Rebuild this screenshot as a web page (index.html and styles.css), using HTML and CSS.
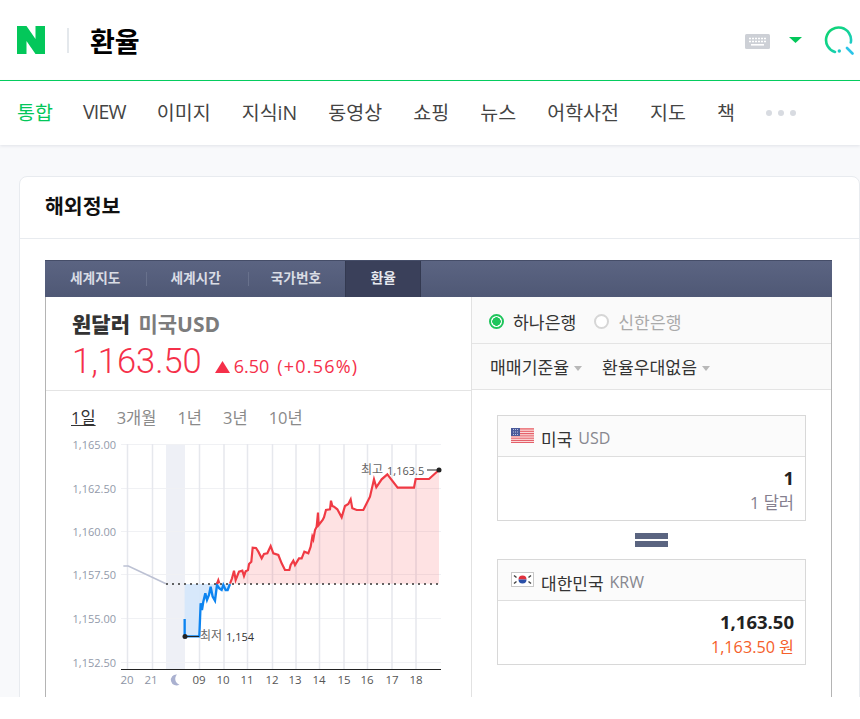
FILE: index.html
```html
<!DOCTYPE html>
<html lang="ko">
<head>
    <meta charset="UTF-8">
    <title>환율 : 네이버 검색</title>
    <link rel="stylesheet" href="styles.css">
</head>
<body>
    <header class="top">
        <svg class="logo" width="28" height="28" viewBox="0 0 28 28"><path d="M0 0h9.5l9 13V0H28v28h-9.5l-9-13v13H0z" fill="#03c75a"/></svg>
        <span class="top-sep"></span>
        <h1 class="query">환율</h1>
        <svg class="kbd" width="25" height="15" viewBox="0 0 25 15">
            <rect width="25" height="15" rx="1.5" fill="#cdd0d6"/>
            <path d="M4 4.500h17M4 7.500h17" stroke="#fff" stroke-width="1.6" stroke-dasharray="2 1"/>
            <rect x="6" y="10" width="13" height="1.6" fill="#fff"/>
        </svg>
        <svg class="drop" width="13" height="6" viewBox="0 0 13 6"><path d="M0 0h13L6.500 6z" fill="#03c75a"/></svg>
        <svg class="search" width="30" height="30" viewBox="0 0 30 30">
            <defs><linearGradient id="sg" x1="0" y1="0" x2="1" y2="1"><stop offset="0" stop-color="#0fd46c"/><stop offset=".6" stop-color="#14d2a0"/><stop offset="1" stop-color="#2bc4e8"/></linearGradient></defs>
            <path d="M11 27A12.500 12.500 0 1 1 26.800 17.500" fill="none" stroke="url(#sg)" stroke-width="2.600" stroke-linecap="round"/>
            <circle cx="15.300" cy="26" r="1.700" fill="#1cc8c8"/>
            <path d="M23 23L28.500 28.500" stroke="#2bc4e8" stroke-width="2.600" stroke-linecap="round"/>
        </svg>
    </header>

    <nav class="gnb">
        <a class="on">통합</a>
        <a class="latin">VIEW</a>
        <a>이미지</a>
        <a>지식iN</a>
        <a>동영상</a>
        <a>쇼핑</a>
        <a>뉴스</a>
        <a>어학사전</a>
        <a>지도</a>
        <a>책</a>
        <span class="more"><i></i><i></i><i></i></span>
    </nav>

    <main class="page">
        <section class="card">
            <h2 class="card-title">해외정보</h2>
            <div class="card-body">
                <div class="tabs">
                    <a class="tab tab-first">세계지도</a>
                    <span class="tab-sep"></span>
                    <a class="tab tab-second">세계시간</a>
                    <span class="tab-sep"></span>
                    <a class="tab tab-third">국가번호</a>
                    <a class="tab active">환율</a>
                </div>
                <div class="panel">
                    <div class="left">
                        <div class="summary">
                            <div class="pair"><b>원달러</b> <em>미국USD</em></div>
                            <div class="rate">
                                <span class="price">1,163.50</span>
                                <svg class="up" width="15" height="12" viewBox="0 0 15 12"><path d="M7.500 0L15 12H0z" fill="#f5304a"/></svg>
                                <span class="diff">6.50</span>
                                <span class="pct">(+0.56%)</span>
                            </div>
                        </div>
                        <div class="periods">
                            <a class="on">1일</a>
                            <a>3개월</a>
                            <a>1년</a>
                            <a>3년</a>
                            <a>10년</a>
                        </div>
                        <svg class="chart" width="425" height="267" viewBox="46 430 425 267">
                            <rect x="166" y="444" width="19" height="225" fill="#eef0f6"/>
                            <g class="grid-h">
                                <path d="M121 444.500H441M121 488.500H441M121 531.500H441M121 574.500H441M121 618.500H441M121 662.500H441"/>
                            </g>
                            <g class="grid-v">
                                <path d="M127.500 444V669M152.500 444V669M199.500 444V669M224 444V669M247.500 444V669M272.500 444V669M296 444V669M319.500 444V669M344 444V669M367.500 444V669M392 444V669M416 444V669"/>
                            </g>
                            <path class="axis" d="M121 669.500H441"/>

                            <g transform="translate(60 430) scale(.3333)">
                                <path class="gray-line" d="M190 408L205 408L318 461"/>
                                <path class="blue-fill" d="M374 462V619H418L422 520L426 540L430 515L436 490L441 510L452 470L458 500L465 512L471 465L478 475L485 480L490 465L497 480L503 480L510 462z"/>
                                <path class="blue-line" d="M374 567V619H418L422 520L426 540L430 515L436 490L441 510L447 495L452 470L458 500L465 512L471 465L478 475L485 480L490 465L497 480L503 480L510 462"/>
                                <path class="red-line" d="M471 462L475 451L478 460"/>
                            </g>
                            <g transform="translate(250 430) scale(.3333)">
                                <path class="red-fill" d="M-60 461L-54 445L-48 422L-43 450L-33 425L-23 422L-18 438L-13 424L-6 420L-3 402L4 395L8 353L18 354L25 365L35 385L42 372L52 370L62 348L70 370L85 375L95 400L105 420L118 420L122 405L130 392L135 405L147 385L155 385L163 365L175 370L182 350L187 320L195 300L204 248L206 285L218 270L228 240L240 238L243 212L252 230L262 238L275 262L285 228L295 222L302 208L307 235L320 240L340 240L360 200L372 148L379 172L395 148L412 133L443 173L492 173L497 147L537 147L567 120V461z"/>
                                <path class="red-line" d="M-60 461L-54 445L-48 422L-43 450L-33 425L-23 422L-18 438L-13 424L-6 420L-3 402L4 395L8 353L18 354L25 365L35 385L42 372L52 370L62 348L70 370L85 375L95 400L105 420L118 420L122 405L130 392L135 405L147 385L155 385L163 365L175 370L182 350L187 320L190 328L195 300L200 290L204 248L206 285L218 270L222 262L228 240L240 238L243 212L247 228L252 230L262 238L275 262L285 228L295 222L302 208L307 235L320 240L340 240L360 200L372 148L379 172L395 148L412 133L443 173L492 173L497 147L537 147L567 120"/>
                            </g>
                            <path class="base" d="M166 584H441"/>

                            <g class="y-labels">
                                <text x="116" y="449">1,165.00</text>
                                <text x="116" y="493">1,162.50</text>
                                <text x="116" y="536">1,160.00</text>
                                <text x="116" y="579">1,157.50</text>
                                <text x="116" y="623">1,155.00</text>
                                <text x="116" y="667">1,152.50</text>
                            </g>
                            <g class="x-labels">
                                <text x="127" y="684">20</text>
                                <text x="151" y="684">21</text>
                            </g>
                            <path class="moon" d="M177 674.500A5.500 5.500 0 1 0 179.500 684.500A6 6 0 0 1 177 674.500z"/>
                            <g class="x-labels dark">
                                <text x="199" y="684">09</text>
                                <text x="223" y="684">10</text>
                                <text x="247" y="684">11</text>
                                <text x="272" y="684">12</text>
                                <text x="295" y="684">13</text>
                                <text x="319" y="684">14</text>
                                <text x="344" y="684">15</text>
                                <text x="367" y="684">16</text>
                                <text x="392" y="684">17</text>
                                <text x="416" y="684">18</text>
                            </g>

                            <path class="marker" d="M185 636.500H199M427 470H438"/>
                            <circle cx="185" cy="636.500" r="2.500" fill="#222"/>
                            <circle cx="439" cy="470" r="2.500" fill="#222"/>
                            <text class="mark-ko" x="200" y="640">최저</text>
                            <text class="mark-num" x="226" y="641">1,154</text>
                            <text class="mark-ko" x="361" y="474">최고</text>
                            <text class="mark-num top-num" x="387" y="475">1,163.5</text>
                        </svg>
                    </div>
                    <div class="right">
                        <div class="banks">
                            <label class="bank"><span class="radio checked"></span>하나은행</label>
                            <label class="bank off"><span class="radio"></span>신한은행</label>
                        </div>
                        <div class="options">
                            <span class="opt">매매기준율</span>
                            <span class="opt">환율우대없음</span>
                        </div>
                        <div class="calc">
                            <div class="box">
                                <div class="box-head">
                                    <svg class="flag" width="23" height="15" viewBox="0 0 23 15">
                                        <rect width="23" height="15" fill="#f6a5a5"/>
                                        <path d="M0 1h23M0 3.300h23M0 5.600h23M0 7.900h23M0 10.200h23M0 12.500h23M0 14.500h23" stroke="#e4606a" stroke-width="1.100"/>
                                        <path d="M0 2.200h23M0 4.500h23M0 6.800h23M0 9h23M0 11.300h23M0 13.500h23" stroke="#fbe6e6" stroke-width=".8"/>
                                        <rect width="9" height="8" fill="#4a5a9a"/>
                                        <path d="M2 1.500h5M2 4h5M2 6.500h5" stroke="#b9c2e2" stroke-width="1" stroke-dasharray="1 1"/>
                                    </svg>
                                    <span class="country">미국</span> <span class="code">USD</span>
                                </div>
                                <div class="box-body">
                                    <strong>1</strong>
                                    <span class="sub">1 달러</span>
                                </div>
                            </div>
                            <div class="equals"><i></i><i></i></div>
                            <div class="box">
                                <div class="box-head">
                                    <svg class="flag" width="23" height="15" viewBox="0 0 23 15">
                                        <rect x=".5" y=".5" width="22" height="14" fill="#fff" stroke="#c8c8c8"/>
                                        <path d="M7.500 7.500a4 4 0 0 1 8 0z" fill="#e0303c"/>
                                        <path d="M7.500 7.500a4 4 0 0 0 8 0z" fill="#2a4fa8"/>
                                        <path d="M3 3.500l2.500 2M3 11.500l2.500-2M20 3.500l-2.500 2M20 11.500l-2.500-2" stroke="#444" stroke-width="1.500"/>
                                    </svg>
                                    <span class="country">대한민국</span> <span class="code">KRW</span>
                                </div>
                                <div class="box-body">
                                    <strong>1,163.50</strong>
                                    <span class="sub won">1,163.50 원</span>
                                </div>
                            </div>
                        </div>
                    </div>
                </div>
            </div>
        </section>
    </main>
</body>
</html>
```

FILE: styles.css
```css
* {
    box-sizing: border-box;
}
body {
    margin: 0;
    background: #fff;
    font-family: "Open Sans", "Noto Sans CJK KR", sans-serif;
    color: #333;
}
a {
    color: inherit;
    text-decoration: none;
}
em, i {
    font-style: normal;
}

/* top search bar */
.top {
    height: 81px;
    display: flex;
    align-items: center;
    padding: 0 6px 0 17px;
    border-bottom: 1px solid #03cf5d;
}
.top-sep {
    width: 2px;
    height: 25px;
    margin: 1px 21px 0 22px;
    background: #e4e8ec;
}
.query {
    margin: 0;
    font-size: 27px;
    font-weight: 700;
    color: #000;
    flex: 1;
}
.kbd {
    margin: 2px 19px 0 0;
}
.drop {
    margin: 0 22px 0 0;
}

/* menu */
.gnb {
    height: 64px;
    display: flex;
    align-items: center;
    gap: 31.100px;
    padding: 0 0 4px 17px;
    font-size: 19.500px;
    color: #444;
    background: #fff;
    box-shadow: 0 1px 3px rgba(120, 130, 150, .18);
    position: relative;
}
.gnb .on {
    color: #03c75a;
    margin-right: -1px;
}
.gnb .latin {
    letter-spacing: -.8px;
    margin-top: 1px;
}
.more {
    display: flex;
    gap: 6px;
    margin-top: 4px;
}
.more i {
    width: 6px;
    height: 6px;
    border-radius: 50%;
    background: #d8dbe1;
}

/* card */
.page {
    height: 552px;
    overflow: hidden;
    padding: 31px 0 0 19px;
    background: #f8f9fb;
}
.card {
    height: 600px;
    background: #fff;
    border: 1px solid #e8ebef;
    border-radius: 8px;
}
.card-title {
    height: 62px;
    margin: 0;
    padding: 0 25px;
    line-height: 59px;
    font-size: 20.500px;
    font-weight: 700;
    color: #111;
    border-bottom: 1px solid #e8ebef;
}
.card-body {
    padding: 21px 27px 0 25px;
}

/* tabs */
.tabs {
    height: 37px;
    display: flex;
    align-items: center;
    background: linear-gradient(#5b6482, #4f5875);
    border-top: 1px solid #454d68;
}
.tab {
    padding: 0 25px;
    font-size: 13.700px;
    font-weight: 700;
    line-height: 34px;
    height: 36px;
    color: #d9dce4;
}
.tab-first {
    padding-right: 26px;
}
.tab-second {
    padding: 0 27px 0 23px;
}
.tab-third {
    padding: 0 24px 0 22px;
}
.tab.active {
    padding: 0 24.500px;
    background: #3a405a;
    border: solid #333950;
    border-width: 0 1px;
    color: #e6e8ee;
}
.tab-sep {
    width: 1px;
    height: 14px;
    background: #68718c;
}

.panel {
    height: 500px;
    display: flex;
    border: solid #b4b4b4;
    border-width: 0 1px;
}
.left {
    width: 426px;
    border-right: 1px solid #e2e2e2;
}
.right {
    flex: 1;
}

/* rate summary */
.summary {
    height: 94px;
    padding: 12px 0 0 26px;
    border-bottom: 1px solid #e4e4e4;
}
.pair {
    font-size: 21px;
    line-height: 30px;
    font-weight: 700;
    color: #333;
}
.pair em {
    color: #7c7c7c;
    margin-left: 3px;
}
.rate {
    display: flex;
    align-items: baseline;
    color: #f5304a;
}
.price {
    font-family: Roboto, sans-serif;
    font-size: 34.500px;
    line-height: 44px;
    font-weight: 300;
}
.up {
    margin: 0 4px 0 13px;
}
.diff {
    font-size: 18px;
}
.pct {
    font-size: 18px;
    letter-spacing: 1.200px;
    margin-left: 8px;
}

.periods {
    height: 39px;
    display: flex;
    align-items: flex-end;
    gap: 21px;
    padding: 0 0 1px 25px;
    font-size: 16.500px;
    color: #8a8a8a;
}
.periods .on {
    color: #333;
    text-decoration: underline;
}
.chart {
    display: block;
}

/* chart parts */
.grid-h path {
    stroke: #f0f1f4;
    stroke-width: 1;
    fill: none;
}
.grid-v path {
    stroke: #e6e8ed;
    stroke-width: 1.500;
    fill: none;
}
.axis {
    stroke: #222;
    stroke-width: 1;
}
.gray-line {
    fill: none;
    stroke: #bcc1d3;
    stroke-width: 5;
}
.blue-fill {
    fill: #d5e7fb;
    fill-opacity: .95;
}
.blue-line {
    fill: none;
    stroke: #0d84f0;
    stroke-width: 7;
}
.red-fill {
    fill: #f5303c;
    fill-opacity: .14;
}
.red-line {
    fill: none;
    stroke: #f03a44;
    stroke-width: 6.500;
}
.base {
    stroke: #333;
    stroke-width: 1.500;
    stroke-dasharray: 2 4;
}
.y-labels text {
    font-size: 11px;
    fill: #929aaa;
    text-anchor: end;
}
.x-labels text {
    font-size: 11.500px;
    fill: #8d94a4;
    text-anchor: middle;
}
.x-labels.dark text {
    fill: #555;
}
.moon {
    fill: #aab1d0;
}
.marker {
    stroke: #222;
    stroke-width: 1;
    fill: none;
}
.mark-ko {
    font-size: 12px;
    fill: #666;
}
.mark-num {
    font-size: 11px;
    fill: #333;
}
.top-num {
    fill: #555;
}

/* right side */
.banks {
    height: 47px;
    display: flex;
    align-items: center;
    gap: 18px;
    padding: 2px 0 0 17px;
    background: #fafafa;
    border-bottom: 1px solid #e4e4e4;
    font-size: 17.200px;
}
.bank {
    display: flex;
    align-items: center;
    gap: 9px;
    color: #333;
}
.bank.off {
    color: #aaa;
}
.radio {
    width: 15px;
    height: 15px;
    border-radius: 50%;
    border: 2px solid #d6d6d6;
    background: #fff;
}
.radio.checked {
    border-color: #1fc55c;
    background: radial-gradient(circle, #1fc55c 4px, #fff 4.500px);
}
.options {
    height: 46px;
    display: flex;
    align-items: center;
    gap: 20px;
    padding-left: 18px;
    background: #fafafa;
    border-bottom: 1px solid #e4e4e4;
    font-size: 17.200px;
    color: #333;
}
.opt::after {
    content: "";
    display: inline-block;
    margin: 0 0 3px 5px;
    border: solid transparent;
    border-width: 5px 4px 0;
    border-top-color: #b8b8b8;
}
.calc {
    padding: 25px 25px 0 25px;
}
.box {
    width: 309px;
    height: 106px;
    border: 1px solid #d8d8d8;
}
.box-head {
    height: 41px;
    display: flex;
    align-items: center;
    gap: 6px;
    padding: 4px 0 0 13px;
    background: #fbfbfb;
    border-bottom: 1px solid #dedede;
    font-size: 16px;
}
.flag {
    margin: -6px 1px 0 0;
}
.country {
    color: #333;
    font-size: 17px;
}
.code {
    color: #87878f;
}
.box-body {
    display: flex;
    flex-direction: column;
    align-items: flex-end;
    padding: 8px 11px 0 0;
}
.box-body strong {
    font-size: 18.500px;
    line-height: 26px;
    color: #222;
}
.sub {
    font-size: 16.500px;
    line-height: 24px;
    color: #85808f;
}
.sub.won {
    font-size: 16.200px;
    color: #f5602a;
}
.equals {
    width: 33px;
    margin: 12px auto;
    display: flex;
    flex-direction: column;
    gap: 2px;
}
.equals i {
    height: 6px;
    background: #5a6480;
}
```
